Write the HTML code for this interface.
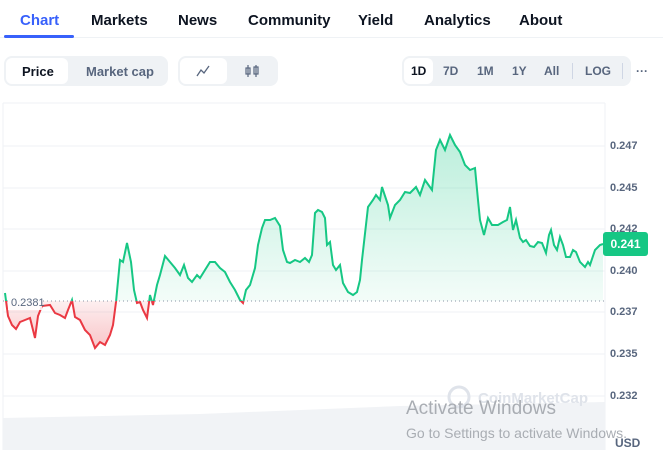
<!DOCTYPE html>
<html><head><style>
body{margin:0;width:663px;height:457px;overflow:hidden;background:#fff;font-family:"Liberation Sans",sans-serif;position:relative}
.t{position:absolute;top:12px;font-size:15px;font-weight:bold;color:#0d1421}
.seg{position:absolute;top:56px;height:30px;background:#eff2f5;border-radius:8px}
.in{position:absolute;top:2px;height:26px;background:#fff;border-radius:6px}
.l{position:absolute;font-size:13px;font-weight:bold;color:#58667e;top:64px}
.y{position:absolute;left:610px;font-size:11px;color:#58667e;font-weight:bold}
</style></head><body>
<div class="t" style="left:20px;color:#3861fb">Chart</div>
<div class="t" style="left:91px">Markets</div>
<div class="t" style="left:178px">News</div>
<div class="t" style="left:248px">Community</div>
<div class="t" style="left:358px">Yield</div>
<div class="t" style="left:424px">Analytics</div>
<div class="t" style="left:519px">About</div>
<div style="position:absolute;left:0;top:37px;width:663px;height:1px;background:#eff2f5"></div>
<div style="position:absolute;left:4px;top:35px;width:70px;height:3px;background:#3861fb;border-radius:2px"></div>

<div class="seg" style="left:4px;width:164px"><div class="in" style="left:2px;width:62px"></div></div>
<div class="l" style="left:22px;color:#0d1421">Price</div>
<div class="l" style="left:86px">Market cap</div>
<div class="seg" style="left:178px;width:100px"><div class="in" style="left:2px;width:47px"></div></div>
<svg style="position:absolute;left:196px;top:64px" width="14" height="14"><path d="M1 12 L5 6 L8 9 L13 2" stroke="#58667e" stroke-width="1.3" fill="none"/></svg>
<svg style="position:absolute;left:244px;top:63px" width="16" height="16"><path d="M4 2V14M12 2V14" stroke="#58667e" stroke-width="1.2"/><rect x="2" y="5" width="4" height="6" fill="none" stroke="#58667e" stroke-width="1.2"/><rect x="10" y="4" width="4" height="7" fill="none" stroke="#58667e" stroke-width="1.2"/></svg>
<div class="seg" style="left:402px;width:229px"><div class="in" style="left:2px;width:29px"></div></div>
<div class="l" style="left:411px;font-size:12px;color:#0d1421">1D</div>
<div class="l" style="left:443px;font-size:12px">7D</div>
<div class="l" style="left:477px;font-size:12px">1M</div>
<div class="l" style="left:512px;font-size:12px">1Y</div>
<div class="l" style="left:544px;font-size:12px">All</div>
<div style="position:absolute;left:572px;top:63px;width:1px;height:16px;background:#cfd6e4"></div>
<div class="l" style="left:585px;font-size:12px">LOG</div>
<div style="position:absolute;left:622px;top:63px;width:1px;height:16px;background:#cfd6e4"></div>
<div class="l" style="left:636px;font-size:12px;top:64px">···</div>

<svg style="position:absolute;left:0;top:0" width="663" height="457">
<defs>
<linearGradient id="g" x1="0" y1="130" x2="0" y2="301" gradientUnits="userSpaceOnUse"><stop offset="0" stop-color="#16c784" stop-opacity=".3"/><stop offset="1" stop-color="#16c784" stop-opacity=".05"/></linearGradient>
<linearGradient id="r" x1="0" y1="301" x2="0" y2="350" gradientUnits="userSpaceOnUse"><stop offset="0" stop-color="#ea3943" stop-opacity=".08"/><stop offset="1" stop-color="#ea3943" stop-opacity=".3"/></linearGradient>
<clipPath id="ca"><rect x="0" y="0" width="663" height="301"/></clipPath>
<clipPath id="cb"><rect x="0" y="301" width="663" height="200"/></clipPath>
<path id="ln" d="M5 293 L8 316 L12 325 L16 329 L20 322 L25 320 L30 318 L33 330 L35 338 L38 316 L42 306 L50 305 L55 313 L60 315 L65 318 L68 310 L72 300 L75 317 L80 320 L85 330 L90 335 L95 348 L100 342 L105 345 L110 335 L113 325 L116 302 L120 260 L123 262 L127 243 L131 262 L134 290 L137 303 L140 302 L143 310 L147 318 L150 295 L153 305 L157 285 L160 275 L165 256 L170 262 L175 268 L180 275 L184 265 L188 278 L192 282 L197 275 L200 278 L205 270 L210 262 L215 262 L220 268 L225 272 L230 282 L235 290 L240 300 L243 303 L246 290 L250 285 L255 268 L258 245 L262 228 L265 220 L270 220 L275 218 L280 226 L283 250 L287 262 L290 263 L295 260 L300 262 L305 258 L309 262 L312 255 L315 213 L318 210 L322 212 L325 218 L327 245 L330 242 L333 265 L336 270 L340 265 L343 283 L348 292 L353 295 L357 292 L360 280 L362 260 L368 207 L373 200 L376 195 L380 200 L382 187 L388 205 L390 218 L395 205 L400 200 L405 192 L410 193 L416 187 L420 195 L425 180 L432 190 L436 150 L440 140 L445 150 L450 135 L455 145 L460 152 L465 165 L470 170 L475 168 L478 200 L480 220 L484 235 L488 218 L492 225 L498 225 L503 222 L507 220 L510 207 L513 230 L516 220 L520 238 L523 242 L526 240 L530 246 L534 247 L538 242 L542 243 L546 253 L549 235 L551 230 L554 245 L557 250 L560 237 L563 245 L566 257 L570 257 L573 250 L576 252 L580 262 L585 267 L588 262 L590 265 L595 250 L600 245 L603 244" fill="none"/>
</defs>
<line x1="3" y1="103" x2="605" y2="103" stroke="#eff2f5"/>
<line x1="3" y1="103" x2="3" y2="450" stroke="#eff2f5"/>
<line x1="605" y1="103" x2="605" y2="450" stroke="#eff2f5"/>
<g stroke="#eff2f5"><line x1="3" y1="146" x2="605" y2="146"/><line x1="3" y1="188" x2="605" y2="188"/><line x1="3" y1="229" x2="605" y2="229"/><line x1="3" y1="271" x2="605" y2="271"/><line x1="3" y1="312" x2="605" y2="312"/><line x1="3" y1="354" x2="605" y2="354"/><line x1="3" y1="396" x2="605" y2="396"/></g>
<path d="M3 418 L200 414 L400 406 L605 402 L605 450 L3 450Z" fill="#f1f3f6"/>
<g clip-path="url(#ca)"><path d="M5 301 L5 293 L8 316 L12 325 L16 329 L20 322 L25 320 L30 318 L33 330 L35 338 L38 316 L42 306 L50 305 L55 313 L60 315 L65 318 L68 310 L72 300 L75 317 L80 320 L85 330 L90 335 L95 348 L100 342 L105 345 L110 335 L113 325 L116 302 L120 260 L123 262 L127 243 L131 262 L134 290 L137 303 L140 302 L143 310 L147 318 L150 295 L153 305 L157 285 L160 275 L165 256 L170 262 L175 268 L180 275 L184 265 L188 278 L192 282 L197 275 L200 278 L205 270 L210 262 L215 262 L220 268 L225 272 L230 282 L235 290 L240 300 L243 303 L246 290 L250 285 L255 268 L258 245 L262 228 L265 220 L270 220 L275 218 L280 226 L283 250 L287 262 L290 263 L295 260 L300 262 L305 258 L309 262 L312 255 L315 213 L318 210 L322 212 L325 218 L327 245 L330 242 L333 265 L336 270 L340 265 L343 283 L348 292 L353 295 L357 292 L360 280 L362 260 L368 207 L373 200 L376 195 L380 200 L382 187 L388 205 L390 218 L395 205 L400 200 L405 192 L410 193 L416 187 L420 195 L425 180 L432 190 L436 150 L440 140 L445 150 L450 135 L455 145 L460 152 L465 165 L470 170 L475 168 L478 200 L480 220 L484 235 L488 218 L492 225 L498 225 L503 222 L507 220 L510 207 L513 230 L516 220 L520 238 L523 242 L526 240 L530 246 L534 247 L538 242 L542 243 L546 253 L549 235 L551 230 L554 245 L557 250 L560 237 L563 245 L566 257 L570 257 L573 250 L576 252 L580 262 L585 267 L588 262 L590 265 L595 250 L600 245 L603 244 L603 301Z" fill="url(#g)"/><use href="#ln" stroke="#16c784" stroke-width="2"/></g>
<g clip-path="url(#cb)"><path d="M5 301 L5 293 L8 316 L12 325 L16 329 L20 322 L25 320 L30 318 L33 330 L35 338 L38 316 L42 306 L50 305 L55 313 L60 315 L65 318 L68 310 L72 300 L75 317 L80 320 L85 330 L90 335 L95 348 L100 342 L105 345 L110 335 L113 325 L116 302 L116 301Z M134 301 L137 303 L140 302 L143 310 L147 318 L150 295 L150 301Z M240 301 L243 303 L246 301Z" fill="url(#r)"/><use href="#ln" stroke="#ea3943" stroke-width="2"/></g>
<line x1="3" y1="301" x2="605" y2="301" stroke="#8a94a6" stroke-dasharray="1 3"/>
<rect x="8" y="292" width="34" height="18" fill="#fff" opacity=".85"/>
<text x="11" y="306" font-size="11" fill="#58667e" font-family="Liberation Sans">0.2381</text>
<circle cx="459" cy="397" r="10" fill="none" stroke="#dfe3ea" stroke-width="3"/>
<text x="478" y="403" font-size="15" font-weight="bold" fill="#dfe3ea" font-family="Liberation Sans">CoinMarketCap</text>
</svg>
<div class="y" style="top:140px">0.247</div>
<div class="y" style="top:182px">0.245</div>
<div class="y" style="top:223px">0.242</div>
<div class="y" style="top:265px">0.240</div>
<div class="y" style="top:306px">0.237</div>
<div class="y" style="top:348px">0.235</div>
<div class="y" style="top:390px">0.232</div>
<div style="position:absolute;left:603px;top:232px;width:45px;height:24px;background:#16c784;border-radius:3px;color:#fff;font-size:12px;font-weight:bold;line-height:24px;text-align:center">0.241</div>
<div style="position:absolute;left:615px;top:436px;font-size:12px;font-weight:bold;color:#58667e">USD</div>
<div style="position:absolute;left:406px;top:398px;font-size:19px;color:#a9adb3">Activate Windows</div>
<div style="position:absolute;left:406px;top:425px;font-size:14px;color:#a9adb3">Go to Settings to activate Windows.</div>
</body></html>
